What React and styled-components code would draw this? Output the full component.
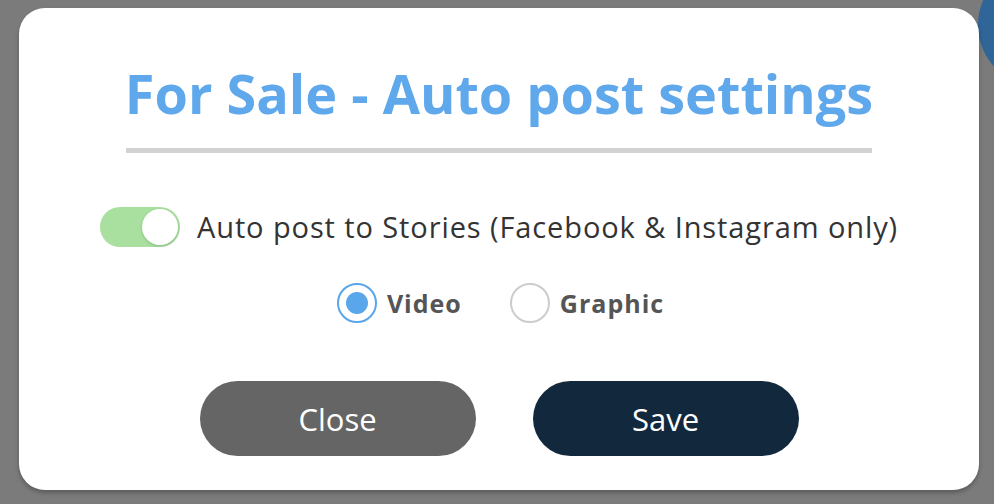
import React, { useState } from 'react';
import styled, { createGlobalStyle } from 'styled-components';

const GlobalStyle = createGlobalStyle`
  html, body {
    margin: 0;
    padding: 0;
    background: #7b7b7b;
    overflow: hidden;
  }
  * {
    box-sizing: border-box;
  }
`;

const Page = styled.div`
  position: relative;
  width: 994px;
  height: 504px;
  padding: 8px 0 0 19px;
  overflow: hidden;
`;

// blue button of the page below, peeking out past the modal's corner
const BehindBadge = styled.div`
  position: absolute;
  left: 978px;
  top: -37px;
  width: 124px;
  height: 124px;
  border-radius: 50%;
  background: #2f6597;
`;

const Modal = styled.div`
  position: relative;
  width: 960px;
  height: 482px;
  background: #ffffff;
  border-radius: 26px;
  box-shadow: 0 3px 4px rgba(0, 0, 0, 0.25);
  display: flex;
  flex-direction: column;
  align-items: center;
  padding-top: 50px;
`;

const Title = styled.h1`
  margin: 0;
  font-family: "Open Sans", sans-serif;
  font-weight: 700;
  font-size: 54px;
  line-height: 70px;
  color: #5fa8ec;
`;

const Divider = styled.hr`
  width: 746px;
  height: 5px;
  margin: 20px 0 0;
  border: none;
  background: #d2d2d2;
`;

const ToggleRow = styled.label`
  display: flex;
  align-items: center;
  gap: 17px;
  margin-top: 54px;
  cursor: pointer;
`;

const Track = styled.span`
  position: relative;
  width: 80px;
  height: 40px;
  border-radius: 20px;
  background: ${({ on }) => (on ? '#a9e0a0' : '#d0d0d0')};
  transition: background 0.2s;
`;

const Knob = styled.span`
  position: absolute;
  top: 2px;
  left: ${({ on }) => (on ? '42px' : '2px')};
  width: 36px;
  height: 36px;
  border-radius: 50%;
  background: #ffffff;
  box-shadow: 0 1px 3px rgba(0, 0, 0, 0.18);
  transition: left 0.2s;
`;

const ToggleText = styled.span`
  font-family: "Open Sans", sans-serif;
  font-size: 29px;
  line-height: 40px;
  color: #333333;
  letter-spacing: 0.9px;
`;

const RadioGroup = styled.div`
  display: flex;
  align-items: center;
  gap: 48px;
  margin-top: 36px;
  padding-left: 3px;
`;

const RadioOption = styled.label`
  display: flex;
  align-items: center;
  gap: 10px;
  cursor: pointer;
`;

const RadioCircle = styled.span`
  display: flex;
  align-items: center;
  justify-content: center;
  width: 40px;
  height: 40px;
  border-radius: 50%;
  border: 2px solid ${({ checked }) => (checked ? '#5aa6ea' : '#cccccc')};
  background: #ffffff;

  &::after {
    content: '';
    width: 22px;
    height: 22px;
    border-radius: 50%;
    background: ${({ checked }) => (checked ? '#5aa6ea' : 'transparent')};
  }
`;

const RadioText = styled.span`
  font-family: "Open Sans", sans-serif;
  font-weight: 700;
  font-size: 25px;
  line-height: 40px;
  letter-spacing: 1px;
  color: #555555;
`;

const Actions = styled.div`
  display: flex;
  gap: 57px;
  margin-top: 58px;
`;

const Button = styled.button`
  height: 75px;
  width: ${({ wide }) => (wide ? '276px' : '266px')};
  border: none;
  border-radius: 38px;
  background: ${({ variant }) => (variant === 'dark' ? '#12293d' : '#656565')};
  color: #ffffff;
  font-family: "Open Sans", sans-serif;
  font-size: 31px;
  cursor: pointer;
`;

const App = () => {
  const [stories, setStories] = useState(true);
  const [kind, setKind] = useState('video');

  return (
    <>
      <GlobalStyle />
      <Page>
        <BehindBadge />
        <Modal>
          <Title>For Sale - Auto post settings</Title>
          <Divider />

          <ToggleRow onClick={() => setStories(!stories)}>
            <Track on={stories ? 1 : 0}>
              <Knob on={stories ? 1 : 0} />
            </Track>
            <ToggleText>Auto post to Stories (Facebook &amp; Instagram only)</ToggleText>
          </ToggleRow>

          <RadioGroup>
            <RadioOption onClick={() => setKind('video')}>
              <RadioCircle checked={kind === 'video'} />
              <RadioText>Video</RadioText>
            </RadioOption>
            <RadioOption onClick={() => setKind('graphic')}>
              <RadioCircle checked={kind === 'graphic'} />
              <RadioText>Graphic</RadioText>
            </RadioOption>
          </RadioGroup>

          <Actions>
            <Button wide>Close</Button>
            <Button variant="dark">Save</Button>
          </Actions>
        </Modal>
      </Page>
    </>
  );
};

export default App;
